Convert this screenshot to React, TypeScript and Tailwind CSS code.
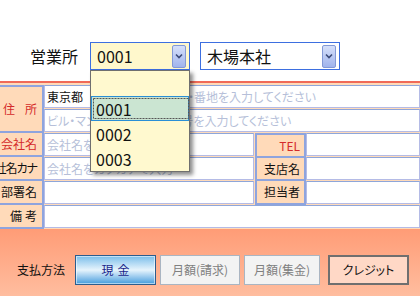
import React from "react";

const Chevron = () => (
  <svg width="8" height="6" viewBox="0 0 8 6">
    <path d="M1 1.5 L4 4.5 L7 1.5" fill="none" stroke="#3b4a78" strokeWidth="1.6" />
  </svg>
);

function ComboArrow() {
  return (
    <div className="w-[14px] h-[23px] flex items-center justify-center rounded-[2px] border border-[#8399d6] bg-gradient-to-b from-[#d6e0fa] to-[#a1b4ec]">
      <Chevron />
    </div>
  );
}

function Field({
  className = "",
  value,
  placeholder,
}: {
  className?: string;
  value?: string;
  placeholder?: string;
}) {
  return (
    <div
      className={
        "h-[23px] bg-white border border-[#b4bbe6] border-t-[#8ea6da] flex items-center pl-[2px] text-[12px] whitespace-nowrap overflow-hidden " +
        className
      }
    >
      {value ? <span>{value}</span> : <span className="text-[#b6bfd9]">{placeholder}</span>}
    </div>
  );
}

function FocusRect() {
  return (
    <svg className="absolute left-[1px] top-[1px]" width="96" height="21" viewBox="0 0 96 21">
      <rect x="0.5" y="0.5" width="95" height="20" fill="none" stroke="#555" strokeWidth="1" strokeDasharray="2 1" />
    </svg>
  );
}

export default function App() {
  return (
    <div className="relative w-[420px] h-[296px] overflow-hidden bg-white text-[#111] font-['Noto_Sans_CJK_JP',sans-serif] [font-feature-settings:'palt']">
      {/* top selector */}
      <div className="h-[81px] flex items-start pt-[42px]">
        <div className="ml-[30px] w-[60px] h-[28px] flex items-center text-[16px]">営業所</div>
        <div className="w-[100px] h-[28px] border border-[#3d6fe0] bg-[#fff8cc] flex items-center justify-between pl-[6px] pr-[3px] text-[16px]">
          <span>0001</span>
          <ComboArrow />
        </div>
        <div className="ml-[10px] w-[140px] h-[28px] border border-[#3d6fe0] bg-white flex items-center justify-between pl-[6px] pr-[3px] text-[16px]">
          <span>木場本社</span>
          <ComboArrow />
        </div>
      </div>
      <div className="h-[2px] bg-[#f06a58]" />

      {/* form */}
      <div className="bg-[#ffdab9] pt-[2px] flex text-[12px]">
        <div className="w-[44px] shrink-0 flex flex-col border-t-2 border-r-2 border-[#8ea4de]">
          <div className="h-[46px] border-b-2 border-[#8ea4de] flex items-center justify-end pr-[5px] text-[#d42a2a]">
            <span>住</span>
            <span className="ml-[10px]">所</span>
          </div>
          <div className="h-[24px] border-b-2 border-[#8ea4de] flex items-center justify-end pr-[5px] text-[#d42a2a] whitespace-nowrap">
            会社名
          </div>
          <div className="h-[24px] border-b-2 border-[#8ea4de] flex items-center justify-end pr-[5px] whitespace-nowrap tracking-[-1px]">
            会社名カナ
          </div>
          <div className="h-[24px] border-b-2 border-[#8ea4de] flex items-center justify-end pr-[5px] whitespace-nowrap">
            部署名
          </div>
          <div className="h-[24px] border-b-2 border-[#8ea4de] flex items-center justify-end pr-[5px] whitespace-nowrap">
            <span>備</span>
            <span className="ml-[3px]">考</span>
          </div>
        </div>

        <div className="flex-1 flex flex-col">
          <div className="flex gap-[1px] mb-[1px]">
            <Field className="w-[92px]" value="東京都" />
            <Field className="flex-1" placeholder="市区町村・番地を入力してください" />
          </div>
          <Field className="mb-[1px]" placeholder="ビル・マンション名・部屋番号を入力してください" />

          <div className="flex">
            <div className="w-[210px] flex flex-col">
              <Field className="mb-[1px]" placeholder="会社名を入力してください" />
              <Field className="mb-[1px]" placeholder="会社名をカタカナで入力" />
              <Field className="mb-[1px]" />
            </div>
            <div className="ml-[1px] w-[51px] flex flex-col border-t-2 border-x-2 border-[#8ea4de]">
              <div className="h-[23px] border-b-2 border-[#8ea4de] flex items-center justify-end pr-[4px] text-[#d42a2a]">
                TEL
              </div>
              <div className="h-[23px] border-b-2 border-[#8ea4de] flex items-center justify-end pr-[4px]">
                支店名
              </div>
              <div className="h-[24px] border-b-2 border-[#8ea4de] flex items-center justify-end pr-[4px]">
                担当者
              </div>
            </div>
            <div className="flex-1 flex flex-col">
              <Field className="mb-[1px]" />
              <Field className="mb-[1px]" />
              <Field className="mb-[1px]" />
            </div>
          </div>
          <Field className="mb-[1px]" />
        </div>
      </div>

      {/* footer */}
      <div className="h-[67px] bg-gradient-to-b from-[#ff9c76] to-[#ffbd9f] flex items-start pt-[26px] pl-[17px] text-[12px]">
        <div className="w-[58px] h-[30px] flex items-center">支払方法</div>
        <div className="w-[81px] h-[30px] flex items-center justify-center border border-[#2c5d8e] bg-gradient-to-b from-[#78bde9] via-[#e6f4fc] to-[#3e9cdc] shadow-[inset_0_0_0_1px_rgba(255,255,255,0.55)] text-[#1b1f8a]">
          <span>現</span>
          <span className="ml-[4px]">金</span>
        </div>
        <div className="ml-[4px] w-[80px] h-[30px] flex items-center justify-center border border-[#aab5c2] bg-[#f3f3f3] text-[#808080]">
          月額(請求)
        </div>
        <div className="ml-[4px] w-[76px] h-[30px] flex items-center justify-center border border-[#aab5c2] bg-[#f3f3f3] text-[#808080]">
          月額(集金)
        </div>
        <div className="ml-[8px] w-[81px] h-[30px] flex items-center justify-center border-2 border-[#6f6f6f] bg-[#ffd8c6] text-[#111]">
          クレジット
        </div>
      </div>

      {/* open dropdown list */}
      <div className="absolute left-[90px] top-[70px] w-[100px] border border-[#6f6f6f] bg-[#fff9cf] shadow-[3px_3px_4px_rgba(0,0,0,0.45)] text-[16px]">
        <div className="h-[25px]" />
        <div className="relative h-[25px] border border-[#2a8fd6] bg-[#cbe5d2] flex items-center pl-[4px]">
          <FocusRect />
          <span>0001</span>
        </div>
        <div className="h-[25px] flex items-center pl-[5px]">0002</div>
        <div className="h-[25px] flex items-center pl-[5px]">0003</div>
      </div>
    </div>
  );
}
